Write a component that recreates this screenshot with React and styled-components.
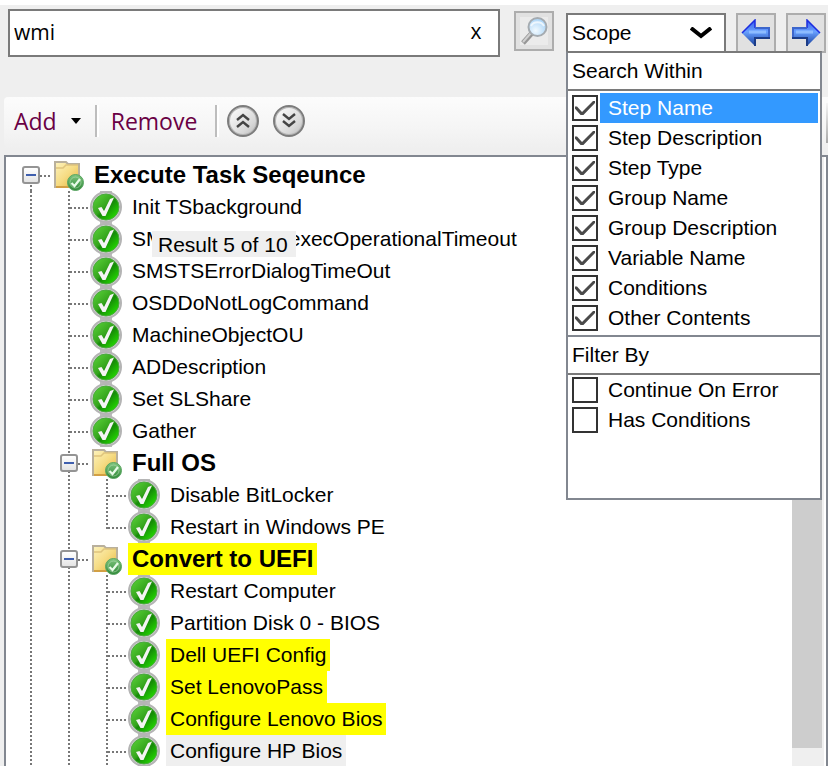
import React, { useState } from "react";
import styled, { createGlobalStyle, css } from "styled-components";

const Global = createGlobalStyle`
  *, *::before, *::after { box-sizing: border-box; }
  html, body, #root { height: 100%; }
  body { margin: 0; background: #efefef; overflow: hidden; }
  button, input, select { font: inherit; color: inherit; margin: 0; }
`;

const ui = `"Liberation Sans", Arial, sans-serif`;
const segoe = `"Open Sans", "Noto Sans", sans-serif`;

const Page = styled.main`
  display: flex;
  flex-direction: column;
  height: 100vh;
  border-top: 5px solid #fff;
  background: #efefef;
  color: #000;
  font: 21px/30px ${ui};
`;

const SearchBar = styled.form`
  display: flex;
  align-items: flex-start;
  padding: 4px 2px 0 8px;
  height: 92px;
`;

const SearchField = styled.div`
  display: flex;
  flex: 1;
  min-width: 0;
  height: 48px;
  border: 2px solid #7a7a7a;
  background: #fff;
  font: 21px/28px ${segoe};
`;

const SearchInput = styled.input`
  flex: 1;
  min-width: 0;
  padding: 0 4px 2px;
  border: 0;
  outline: 0;
  background: transparent;
`;

const ClearButton = styled.button`
  width: 44px;
  padding: 0 0 4px;
  border: 0;
  background: transparent;
`;

const IconButton = styled.button`
  display: grid;
  place-items: center;
  flex: none;
  width: 40px;
  height: 40px;
  margin: ${(p) => p.$margin};
  padding: 0;
  border: 2px solid #adadad;
  background: #e1e1e1;
`;

const ScopeBox = styled.div`
  position: relative;
  flex: none;
  width: 160px;
  margin-top: 4px;
`;

const ScopeControl = styled.div`
  display: flex;
  align-items: center;
  height: 40px;
  padding-right: 12px;
  border: 2px solid #7a7a7a;
  background: #fff;
`;

const ScopeSelect = styled.select`
  flex: 1;
  min-width: 0;
  height: 36px;
  padding: 0 4px;
  border: 0;
  outline: 0;
  appearance: none;
  background: transparent;
`;

const ScopePanel = styled.div`
  position: absolute;
  z-index: 2;
  top: 38px;
  left: 0;
  width: 256px;
  height: 449px;
  border: 2px solid #828790;
  border-top-color: #7a7a7a;
  background: #fff;
`;

const Group = styled.fieldset`
  margin: 0;
  padding: 0;
  border: 0;
`;

const GroupTitle = styled.legend`
  float: left;
  width: 100%;
  height: 38px;
  padding: 2px 4px 0;
  border-bottom: 2px solid #7a7a7a;
  line-height: 32px;
`;

const Options = styled.div`
  clear: both;
  display: grid;
  padding: ${(p) => (p.$ruled ? "2px" : "0")} 2px 2px 4px;
  ${(p) => p.$ruled && "border-bottom: 2px solid #828790;"}
`;

const Option = styled.label`
  display: flex;
  align-items: center;
  height: 30px;
`;

const Check = styled.input`
  appearance: none;
  display: grid;
  place-items: center;
  flex: none;
  width: 26px;
  height: 26px;
  border: 2px solid #333;
  background: #fff;
  &:checked::after {
    content: "";
    width: 20px;
    height: 14px;
    background: #4a4a4a;
    clip-path: polygon(0 40%, 10% 40%, 35% 78%, 90% 0, 100% 0, 100% 14%, 42% 100%, 28% 100%, 0 56%);
  }
`;

const OptionText = styled.span`
  flex: 1;
  height: 30px;
  margin-left: 2px;
  padding-left: 8px;
  line-height: 29px;
  ${(p) => p.$active && css`background: #3399ff; color: #fff;`}
`;

const Toolbar = styled.div`
  display: flex;
  align-items: center;
  height: 52px;
  margin: 0 0 6px 4px;
  padding: 0 0 4px 10px;
  border-radius: 4px 0 0 4px;
  background:
    linear-gradient(#f4f4f4, #a8a8a8) 100% 6px / 2px 40px no-repeat,
    linear-gradient(#fcfcfc, #f5f5f5 60%, #efefef);
  color: #6a0044;
  font: 23px/30px ${segoe};
`;

const ToolButton = styled.button`
  display: flex;
  align-items: center;
  gap: 14px;
  padding: 0;
  border: 0;
  background: transparent;
`;

const Separator = styled.span`
  width: 4px;
  height: 32px;
  margin: 0 ${(p) => p.$after} 0 ${(p) => p.$before};
  border-left: 2px solid #bdbdbd;
  border-right: 2px solid #fff;
`;

const RoundButton = styled.button`
  display: grid;
  place-items: center;
  width: 32px;
  height: 32px;
  margin-right: 14px;
  padding: 0;
  border: 2px solid #7c7c7c;
  border-radius: 50%;
  background: linear-gradient(135deg, #fff, #d8d8d8 70%, #bbb);
  box-shadow: inset 0 0 0 1px #b5b5b5;
`;

const TreeFrame = styled.section`
  display: flex;
  flex: 1;
  min-height: 0;
  margin-left: 4px;
  border: solid #828790;
  border-width: 2px 2px 0;
  background: #fff;
`;

const Tree = styled.ul`
  flex: 1;
  min-width: 0;
  margin: 0;
  padding: 2px 0 0 6px;
  overflow: hidden;
  list-style: none;
`;

const Row = styled.li`
  display: flex;
  align-items: center;
  height: 32px;
  white-space: nowrap;
`;

const dots = (dir) => `repeating-linear-gradient(${dir}, #777 0 2px, #fff 2px 4px)`;

const guideImages = {
  pass: `${dots("180deg")} 18px 0 / 2px 100% no-repeat`,
  branch: `${dots("180deg")} 18px 0 / 2px 100% no-repeat, ${dots("90deg")} 20px 16px / 18px 2px no-repeat`,
  end: `${dots("180deg")} 18px 0 / 2px 18px no-repeat, ${dots("90deg")} 20px 16px / 18px 2px no-repeat`,
  root: `${dots("180deg")} 18px 100% / 2px 14px no-repeat, ${dots("90deg")} 20px 16px / 18px 2px no-repeat`,
};

const Guide = styled.span`
  display: grid;
  place-items: center;
  flex: none;
  width: 38px;
  height: 32px;
  background: ${(p) => guideImages[p.$kind]};
`;

const Expander = styled.button`
  display: grid;
  place-items: center;
  width: 18px;
  height: 18px;
  padding: 0;
  border: 2px solid #949494;
  border-radius: 3px;
  background: linear-gradient(#fff, #e4e4e4);
  &::after {
    content: "";
    width: 10px;
    height: 2px;
    background: #3f5fae;
  }
`;

const IconSlot = styled.span`
  display: flex;
  flex: none;
  margin-left: 2px;
`;

const Label = styled.span`
  position: relative;
  height: 32px;
  margin-left: 6px;
  padding: 0 4px;
  line-height: 32px;
  ${(p) => p.$bold && "font-weight: 700; font-size: 24px;"}
  background: ${(p) => ({ hit: "#ffff00", current: "#efefef" })[p.$mark] || "transparent"};
`;

const Tooltip = styled.span`
  position: absolute;
  top: 8px;
  left: 24px;
  height: 26px;
  padding: 0 8px 0 6px;
  background: #efefef;
  line-height: 27px;
`;

const ScrollTrack = styled.div`
  flex: none;
  width: 34px;
  padding-right: 4px;
  background: linear-gradient(90deg, #efefef 32px, #fff 32px);
`;

const ScrollThumb = styled.div`
  height: calc(100% - 18px);
  background: #cdcdcd;
`;

const Magnifier = () => (
  <svg width="28" height="28" viewBox="0 0 28 28" aria-hidden="true">
    <defs>
      <radialGradient id="lens" cx=".4" cy=".7" r=".8">
        <stop offset="0" stopColor="#f2faff" />
        <stop offset="1" stopColor="#9dcdf5" />
      </radialGradient>
    </defs>
    <rect width="28" height="28" fill="#ebebeb" />
    <path d="M3 26 12 16" stroke="#969696" strokeWidth="5" />
    <path d="M3 25 11 16" stroke="#d0d0d0" strokeWidth="2" />
    <circle cx="17.5" cy="10" r="9" fill="url(#lens)" stroke="#a5abb0" strokeWidth="2" />
    <path d="M11 9a7 6 0 0 1 13 0" fill="none" stroke="#fff" strokeWidth="2" opacity=".7" />
  </svg>
);

const Arrow = ({ right }) => (
  <svg width="30" height="28" viewBox="0 0 30 28" aria-hidden="true">
    <defs>
      <linearGradient id={right ? "blueR" : "blueL"} x1="0" y1="0" x2="0" y2="1">
        <stop offset="0" stopColor="#3458e8" />
        <stop offset=".45" stopColor="#69a1ff" />
        <stop offset="1" stopColor="#173f9c" />
      </linearGradient>
    </defs>
    <g transform={right ? "matrix(-1 0 0 1 30 0)" : undefined}>
      <path d="M1 14 14 1V9H29V19H14V27Z" fill={`url(#${right ? "blueR" : "blueL"})`} />
      <path d="M1 14 14 1V9" fill="none" stroke="#1c2ce0" strokeWidth="1.5" />
      <path d="M14 9H28V18" fill="none" stroke="#3c66cc" strokeWidth="2" />
      <path d="M14 27V19H29" fill="none" stroke="#1c3c86" strokeWidth="2" />
      <path d="M8 13H25" stroke="#8dbcff" strokeWidth="3" />
    </g>
  </svg>
);

const Chevrons = ({ down }) => (
  <svg width="16" height="16" viewBox="0 0 16 16" fill="none" stroke="#444" strokeWidth="2.4" aria-hidden="true">
    <path d={down ? "M2 1 8 6 14 1M2 8 8 13 14 8" : "M2 7 8 2 14 7M2 14 8 9 14 14"} />
  </svg>
);

const Folder = () => (
  <svg width="32" height="32" viewBox="0 0 32 32" aria-hidden="true">
    <defs>
      <linearGradient id="folder" x1="0" y1="0" x2="1" y2="1">
        <stop offset="0" stopColor="#fdf3bd" />
        <stop offset=".5" stopColor="#f6dc84" />
        <stop offset="1" stopColor="#e6b43c" />
      </linearGradient>
      <linearGradient id="badge" x1="0" y1="0" x2="0" y2="1">
        <stop offset="0" stopColor="#7fc67f" />
        <stop offset="1" stopColor="#2d8736" />
      </linearGradient>
    </defs>
    <path d="M3 3H14L16 5H27V28H3Z" fill="url(#folder)" stroke="#b9b09c" strokeWidth="2" />
    <path d="M4 9H11L14 6H26" fill="none" stroke="#dfc47c" strokeWidth="1.5" />
    <path d="M4 28H22" stroke="#d3a043" strokeWidth="2" />
    <circle cx="23.5" cy="23.5" r="8" fill="url(#badge)" stroke="#5aa562" />
    <circle cx="23.5" cy="23.5" r="5.5" fill="none" stroke="#b7e0b7" opacity=".6" />
    <path d="M19.5 24 22.5 27 28 20" fill="none" stroke="#e8fbe8" strokeWidth="2.2" />
  </svg>
);

const StepIcon = () => (
  <svg width="32" height="32" viewBox="0 0 32 32" aria-hidden="true">
    <defs>
      <linearGradient id="step" x1=".1" y1=".1" x2=".9" y2=".9">
        <stop offset="0" stopColor="#55cc35" />
        <stop offset=".45" stopColor="#35a51d" />
        <stop offset=".55" stopColor="#168a08" />
        <stop offset="1" stopColor="#25df00" />
      </linearGradient>
    </defs>
    <path d="M10 0H22V32H10Z" fill="#bcbcbc" />
    <circle cx="16" cy="16" r="15" fill="#d2d2d2" stroke="#b4b4b4" strokeWidth="2" />
    <circle cx="16" cy="16" r="13" fill="url(#step)" stroke="#4aa83e" />
    <path d="M8 17 11.5 16 14 20 20 8 24 6.500 15.500 25H12.500Z" fill="#f4f4f4" />
  </svg>
);

const rows = [
  { text: "Execute Task Seqeunce", guides: ["root"], folder: true },
  { text: "Init TSbackground", guides: ["pass", "branch"] },
  { text: "SMSTSWaitCcmexecOperationalTimeout", guides: ["pass", "branch"], tip: "Result 5 of 10" },
  { text: "SMSTSErrorDialogTimeOut", guides: ["pass", "branch"] },
  { text: "OSDDoNotLogCommand", guides: ["pass", "branch"] },
  { text: "MachineObjectOU", guides: ["pass", "branch"] },
  { text: "ADDescription", guides: ["pass", "branch"] },
  { text: "Set SLShare", guides: ["pass", "branch"] },
  { text: "Gather", guides: ["pass", "branch"] },
  { text: "Full OS", guides: ["pass", "branch"], folder: true },
  { text: "Disable BitLocker", guides: ["pass", "pass", "branch"] },
  { text: "Restart in Windows PE", guides: ["pass", "pass", "end"] },
  { text: "Convert to UEFI", guides: ["pass", "branch"], folder: true, mark: "hit" },
  { text: "Restart Computer", guides: ["pass", "pass", "branch"] },
  { text: "Partition Disk 0 - BIOS", guides: ["pass", "pass", "branch"] },
  { text: "Dell UEFI Config", guides: ["pass", "pass", "branch"], mark: "hit" },
  { text: "Set LenovoPass", guides: ["pass", "pass", "branch"], mark: "hit" },
  { text: "Configure Lenovo Bios", guides: ["pass", "pass", "branch"], mark: "hit" },
  { text: "Configure HP Bios", guides: ["pass", "pass", "branch"], mark: "current" },
];

const within = ["Step Name", "Step Description", "Step Type", "Group Name", "Group Description", "Variable Name", "Conditions", "Other Contents"];
const filters = ["Continue On Error", "Has Conditions"];

const OptionList = ({ title, items, checked, active, ruled }) => (
  <Group>
    <GroupTitle>{title}</GroupTitle>
    <Options $ruled={ruled}>
      {items.map((name) => (
        <Option key={name}>
          <Check type="checkbox" defaultChecked={checked} />
          <OptionText $active={name === active}>{name}</OptionText>
        </Option>
      ))}
    </Options>
  </Group>
);

const TreeRow = ({ text, guides, folder, mark, tip }) => (
  <Row>
    {guides.map((kind, i) => (
      <Guide key={i} $kind={kind}>
        {folder && i === guides.length - 1 && <Expander type="button" aria-label={`Collapse ${text}`} />}
      </Guide>
    ))}
    <IconSlot>{folder ? <Folder /> : <StepIcon />}</IconSlot>
    <Label $bold={folder} $mark={mark}>
      {text}
      {tip && <Tooltip role="tooltip">{tip}</Tooltip>}
    </Label>
  </Row>
);

export default function App() {
  const [query, setQuery] = useState("wmi");
  return (
    <Page>
      <Global />
      <SearchBar onSubmit={(e) => e.preventDefault()}>
        <SearchField>
          <SearchInput aria-label="Search" value={query} onChange={(e) => setQuery(e.target.value)} />
          <ClearButton type="button" aria-label="Clear search" onClick={() => setQuery("")}>x</ClearButton>
        </SearchField>
        <IconButton aria-label="Find" $margin="2px 12px 0 14px"><Magnifier /></IconButton>
        <ScopeBox>
          <ScopeControl>
            <ScopeSelect aria-label="Scope"><option>Scope</option></ScopeSelect>
            <svg width="22" height="12" viewBox="0 0 22 12" aria-hidden="true">
              <path d="M1 1 11 9 21 1" fill="none" stroke="#000" strokeWidth="4" />
            </svg>
          </ScopeControl>
          <ScopePanel>
            <OptionList title="Search Within" items={within} checked active="Step Name" ruled />
            <OptionList title="Filter By" items={filters} />
          </ScopePanel>
        </ScopeBox>
        <IconButton type="button" aria-label="Previous result" $margin="4px 10px 0"><Arrow /></IconButton>
        <IconButton type="button" aria-label="Next result" $margin="4px 0 0"><Arrow right /></IconButton>
      </SearchBar>
      <Toolbar role="toolbar">
        <ToolButton type="button">
          Add
          <svg width="10" height="6" viewBox="0 0 10 6" aria-hidden="true"><path d="M0 0H10L5 6Z" fill="#000" /></svg>
        </ToolButton>
        <Separator $before="14px" $after="12px" />
        <ToolButton type="button">Remove</ToolButton>
        <Separator $before="18px" $after="8px" />
        <RoundButton type="button" aria-label="Collapse all"><Chevrons /></RoundButton>
        <RoundButton type="button" aria-label="Expand all"><Chevrons down /></RoundButton>
      </Toolbar>
      <TreeFrame>
        <Tree>{rows.map((row) => <TreeRow key={row.text} {...row} />)}</Tree>
        <ScrollTrack><ScrollThumb /></ScrollTrack>
      </TreeFrame>
    </Page>
  );
}
